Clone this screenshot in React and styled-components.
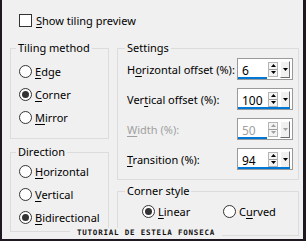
import React from 'react';
import styled, { createGlobalStyle } from 'styled-components';

const GlobalStyle = createGlobalStyle`
  html, body {
    margin: 0;
    padding: 0;
    background: #f0f0f0;
  }
`

const Frame = styled.div`
  position: relative;
  box-sizing: border-box;
  width: 306px;
  height: 241px;
  overflow: hidden;
  background: #f0f0f0;
  border-left: 2px solid #1d1822;
  border-right: 3px solid #1d1822;
  border-bottom: 2px solid #1d1822;
  padding: 12px 4px 0 8px;
  font-family: "Noto Sans", "Liberation Sans", sans-serif;
  font-size: 11px;
  color: #000;
  white-space: nowrap;
`

const PreviewRow = styled.label`
  display: flex;
  align-items: center;
  gap: 4px;
  height: 16px;
  padding-left: 9px;
`

const CheckBox = styled.span`
  box-sizing: border-box;
  width: 13px;
  height: 13px;
  border: 1px solid #333;
  background: #fff;
`

const Columns = styled.div`
  display: grid;
  grid-template-columns: 99px 182px;
  column-gap: 8px;
  margin-top: 12px;
`

const Column = styled.div`
  display: flex;
  flex-direction: column;
  gap: ${props => props.$gap}px;
`

const Group = styled.fieldset`
  margin: 0;
  padding: ${props => props.$pad};
  border: 1px solid #dcdcdc;
  min-width: 0;
`

// legend sits after the fieldset's left padding, so each group nudges it back
const Legend = styled.legend`
  margin-left: ${props => props.$offset}px;
  padding: 0 2px;
  line-height: 16px;
  height: 16px;
`

const Key = styled.u`
  text-decoration-thickness: 1px;
  text-underline-offset: 2px;
`

const RadioRow = styled.label`
  display: flex;
  align-items: center;
  gap: 3px;
  height: 23px;
`

const RadioCircle = styled.span`
  box-sizing: border-box;
  width: 13px;
  height: 13px;
  border-radius: 50%;
  border: 1px solid #333;
  background: #fff;
  display: flex;
  align-items: center;
  justify-content: center;

  &::after {
    content: '';
    width: 7px;
    height: 7px;
    border-radius: 50%;
    background: ${props => props.$checked ? '#333' : 'transparent'};
  }
`

const FieldRow = styled.div`
  display: flex;
  align-items: center;
  justify-content: space-between;
  height: 22px;
  color: ${props => props.$disabled ? '#a0a0a0' : '#000'};
`

const Spinner = styled.div`
  position: relative;
  box-sizing: border-box;
  display: flex;
  align-items: center;
  width: 56px;
  height: 22px;
  border: 1px solid #9a9a9a;
  background: #fff;
`

const Field = styled.span`
  flex: 0 0 29px;
  align-self: stretch;
  box-sizing: border-box;
  padding: 3px 0 0 4px;
  font-size: 12px;
  color: ${props => props.$disabled ? '#a0a0a0' : '#000'};
`

const Underline = styled.span`
  position: absolute;
  left: 0;
  bottom: 0;
  height: 2px;
  width: ${props => props.$wide ? '52px' : '29px'};
  background: #0078d7;
`

const UpDown = styled.span`
  display: flex;
  flex-direction: column;
  box-sizing: border-box;
  width: 10px;
  height: 15px;
  margin-left: 1px;
  border: 1px solid #b4b4b4;
  background: #f4f4f4;
`

const SpinHalf = styled.span`
  flex: 1;
  display: flex;
  align-items: center;
  justify-content: center;

  & + & {
    border-top: 1px solid #9a9a9a;
  }
`

const DropButton = styled.span`
  box-sizing: border-box;
  display: flex;
  align-items: center;
  justify-content: center;
  width: 10px;
  height: 17px;
  margin-left: 2px;
  background: #f0f0f0;
  border-top: 1px solid #fff;
  border-left: 1px solid #fff;
  border-right: 1px solid #6d6d6d;
  border-bottom: 1px solid #6d6d6d;
`

const CornerRow = styled.div`
  display: grid;
  grid-template-columns: 81px auto;
  padding-left: 24px;
`

const Watermark = styled.div`
  position: absolute;
  left: 68px;
  bottom: 0;
  width: 152px;
  height: 11px;
  background: #f0f0f0;
  font-family: "DejaVu Sans Mono", "Liberation Mono", monospace;
  font-weight: bold;
  font-size: 7.5px;
  line-height: 9px;
  letter-spacing: 0.8px;
  color: #111;
  text-align: center;
`

function Arrow({ up, color = '#000' }) {
  return (
    <svg width="5" height="3" viewBox="0 0 5 3">
      <polygon points={up ? '0,3 5,3 2.5,0' : '0,0 5,0 2.5,3'} fill={color} />
    </svg>
  )
}

function Radio({ checked, children }) {
  return (
    <RadioRow>
      <RadioCircle $checked={checked} />
      <span>{children}</span>
    </RadioRow>
  )
}

function SpinField({ label, value, disabled, wide }) {
  const arrowColor = disabled ? '#a0a0a0' : '#000'
  return (
    <FieldRow $disabled={disabled}>
      <span>{label}</span>
      <Spinner>
        <Field $disabled={disabled}>{value}</Field>
        <UpDown>
          <SpinHalf><Arrow up color={arrowColor} /></SpinHalf>
          <SpinHalf><Arrow color={arrowColor} /></SpinHalf>
        </UpDown>
        <DropButton><Arrow color={arrowColor} /></DropButton>
        <Underline $wide={wide} />
      </Spinner>
    </FieldRow>
  )
}

export default function App() {
  return (
    <Frame>
      <GlobalStyle />
      <PreviewRow>
        <CheckBox />
        <span><Key>S</Key>how tiling preview</span>
      </PreviewRow>
      <Columns>
        <Column $gap={5}>
          <Group $pad="4px 0 9px 8px">
            <Legend $offset={-3}>Tiling method</Legend>
            <Radio><Key>E</Key>dge</Radio>
            <Radio checked><Key>C</Key>orner</Radio>
            <Radio><Key>M</Key>irror</Radio>
          </Group>
          <Group $pad="0 0 2px 8px">
            <Legend $offset={-3}>Direction</Legend>
            <Radio><Key>H</Key>orizontal</Radio>
            <Radio><Key>V</Key>ertical</Radio>
            <Radio checked><Key>B</Key>idirectional</Radio>
          </Group>
        </Column>
        <Column $gap={3}>
          <Group $pad="2px 5px 9px 9px">
            <Legend $offset={-2}>Settings</Legend>
            <Column $gap={8}>
              <SpinField label={<>H<Key>o</Key>rizontal offset (%):</>} value="6" />
              <SpinField label={<>Ver<Key>t</Key>ical offset (%):</>} value="100" wide />
              <SpinField label={<><Key>W</Key>idth (%):</>} value="50" disabled />
              <SpinField label={<><Key>T</Key>ransition (%):</>} value="94" wide />
            </Column>
          </Group>
          <Group $pad="1px 0 12px 0">
            <Legend $offset={7}>Corner style</Legend>
            <CornerRow>
              <Radio checked><Key>L</Key>inear</Radio>
              <Radio>C<Key>u</Key>rved</Radio>
            </CornerRow>
          </Group>
        </Column>
      </Columns>
      <Watermark>TUTORIAL DE ESTELA FONSECA</Watermark>
    </Frame>
  )
}
